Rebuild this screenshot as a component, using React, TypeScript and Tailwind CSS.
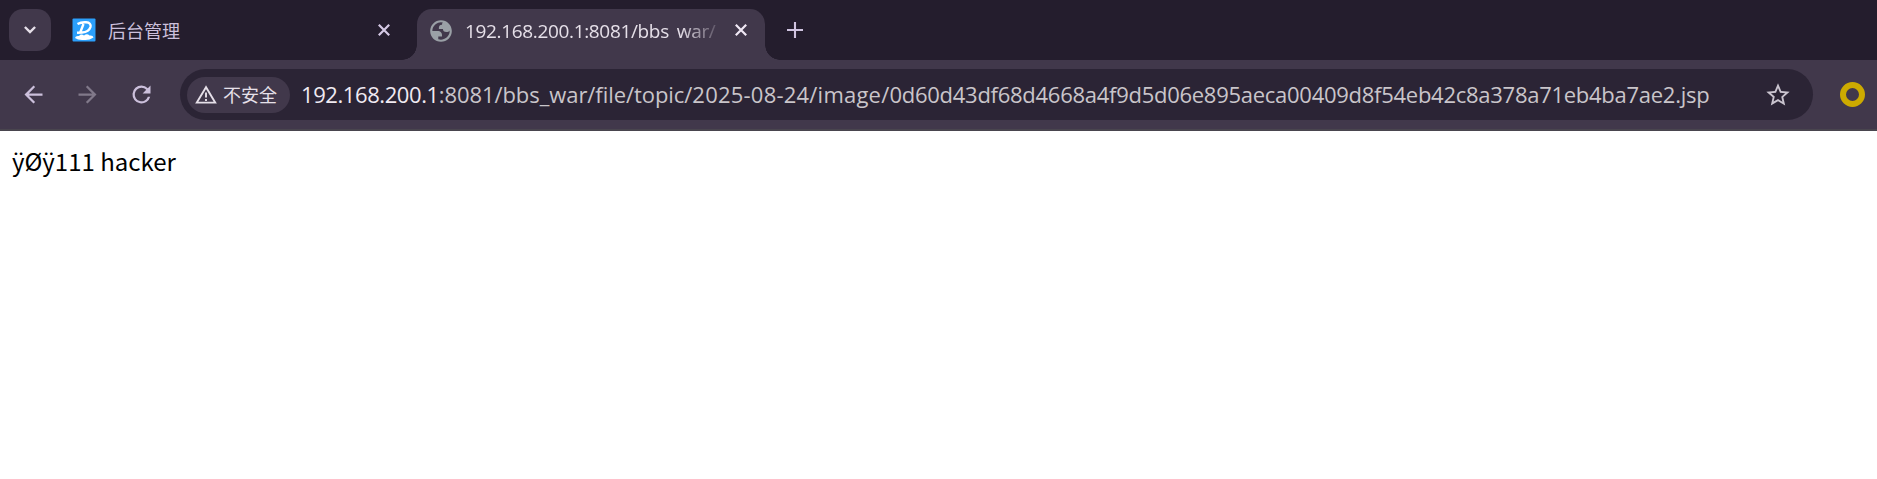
import React from "react";

const ui = "font-['Open_Sans','Noto_Sans_CJK_SC',sans-serif]";

function Close({ className }: { className: string }) {
  return (
    <svg viewBox="0 0 12 12" className={`size-3 shrink-0 ${className}`} fill="none" stroke="currentColor" strokeWidth="2.2">
      <path d="M.8.8 11.2 11.2M11.2.8.8 11.2" />
    </svg>
  );
}

function Mat({ d, className }: { d: string; className: string }) {
  return (
    <svg viewBox="0 0 24 24" className={`shrink-0 ${className}`} fill="currentColor" fillRule="evenodd">
      <path d={d} />
    </svg>
  );
}

function TabStrip() {
  return (
    <div className="flex h-[60px] bg-[#241d2d] pt-[9px]">
      <div className="ml-[9px] flex size-[42px] items-center justify-center rounded-[14px] bg-[#41384b] text-[#e6e0e9]">
        <svg viewBox="0 0 12 8" className="h-2 w-3" fill="none" stroke="currentColor" strokeWidth="2.4">
          <path d="M.9 1 6 6.100 11.100 1" />
        </svg>
      </div>
      <div className="flex h-[42px] w-[351px] items-center pl-[21px]">
        <svg viewBox="0 0 24 24" className="size-6 shrink-0">
          <rect x=".5" y=".5" width="23" height="23" rx="1" fill="#2b9ffb" />
          <path d="M5.500 6Q9 4 14 4.300Q19.500 4.800 18.500 9Q17 14 10 14.500L5 14.700M11.500 6 8.300 14.200" fill="none" stroke="#fff" strokeWidth="2.400" />
          <path d="M3 20Q3.500 17.500 7 18Q9 15.500 12 17.500Q15 15 17.500 17.500Q21 17 21.500 19.500Q17 22.500 12 22Q6 22.500 3 20Z" fill="#fff" />
        </svg>
        <span className={`${ui} ml-[12px] pt-[2px] text-[18px] leading-6 text-[#ccc0dc]`}>后台管理</span>
        <Close className="ml-auto mr-[12px] text-[#d5c9e5]" />
      </div>
      <div className="flex self-end">
        <div className="h-[15px] w-[15px] self-end bg-[radial-gradient(circle_at_0_0,transparent_14.500px,#41384b_15px)]" />
        <div className="flex h-[51px] w-[348px] items-start rounded-t-[15px] bg-[#41384b] pt-[9px]">
          <Mat
            className="ml-[11px] size-[26px] text-[#9aa0a6]"
            d="M12 2C6.480 2 2 6.480 2 12s4.480 10 10 10 10-4.480 10-10S17.520 2 12 2zM4 12h4.400c3.407.022 4.922 1.730 4.543 5.127H9.488v2.470a8.004 8.004 0 0 0 10.498-8.080C19.327 12.506 18.332 13 17 13c-2.137 0-3.206-.916-3.206-2.750h-3.748c-.274-2.728.683-4.092 2.870-4.092 0-.975.327-1.597.811-1.970A8.004 8.004 0 0 0 4 12z"
          />
          <span className={`${ui} ml-[11px] h-[21px] w-[252px] overflow-hidden whitespace-nowrap text-[19px] leading-[26px] tracking-[-0.34px] text-[#e6e0e9] [mask-image:linear-gradient(to_right,#000_215px,transparent_260px)]`}>
            192.168.200.1:8081/bbs_war/
          </span>
          <Close className="ml-[18px] mt-[6px] text-[#f0e8f5]" />
        </div>
        <div className="h-[15px] w-[15px] self-end bg-[radial-gradient(circle_at_100%_0,transparent_14.500px,#41384b_15px)]" />
      </div>
      <svg viewBox="0 0 16 16" className="ml-[7px] mt-[13px] size-4" fill="none" stroke="#d0c4e0" strokeWidth="2.1">
        <path d="M8 0V16M0 8H16" />
      </svg>
    </div>
  );
}

function Toolbar() {
  return (
    <div className="flex h-[71px] items-center border-b-2 border-[#49454e] bg-[#41384b]">
      <Mat className="ml-[19.5px] size-[27px] text-[#ccc0dc]" d="M20 11H7.830l5.590-5.590L12 4l-8 8 8 8 1.410-1.410L7.830 13H20v-2z" />
      <Mat className="ml-[27px] size-[27px] text-[#81798a]" d="M12 4l-1.410 1.410L16.170 11H4v2h12.170l-5.580 5.590L12 20l8-8z" />
      <Mat className="ml-[27px] size-[27px] text-[#ccc0dc]" d="M17.650 6.350A7.958 7.958 0 0 0 12 4a8 8 0 1 0 7.730 10h-2.080A6 6 0 1 1 12 6c1.660 0 3.140.690 4.220 1.780L13 11h7V4l-2.350 2.350z" />
      <div className="ml-[25.5px] flex h-[51px] w-[1633px] items-center rounded-full bg-[#2b2435] pl-[7px]">
        <div className="flex h-9 w-[103px] items-center rounded-full bg-[#41384b] pl-[8px] text-[#e6e0e9]">
          <svg viewBox="0 0 22 20" className="h-5 w-[22px] shrink-0" fill="none" stroke="currentColor" strokeWidth="1.900">
            <path d="M11 2.200 1.800 17.600H20.200ZM11 7.500V12.500M11 14V16" />
          </svg>
          <span className={`${ui} ml-[6px] pt-px text-[18px] leading-6`}>不安全</span>
        </div>
        <div className={`${ui} ml-[11px] whitespace-nowrap pb-[2px] text-[22px] leading-[30px] text-[#c9c5ca]`}>
          <span className="tracking-[-0.420px] text-[#f0eaf2]">192.168.200.1</span>
          <span className="tracking-[-0.060px]">:8081/bbs_war/file/topic/</span>
          <span className="tracking-[0.220px]">2025-08-24/image/</span>
          <span className="tracking-[-0.270px]">0d60d43df68d4668a4f9d5d06e895aeca00409d8f54eb42c8a378a71eb4ba7ae2.jsp</span>
        </div>
        <Mat className="ml-auto mr-[21px] size-[28px] text-[#cac4cf]" d="M22 9.240l-7.190-.620L12 2 9.190 8.630 2 9.240l5.460 4.730L5.820 21 12 17.270 18.180 21l-1.630-7.030L22 9.240zM12 15.400l-3.760 2.270 1-4.280-3.320-2.880 4.380-.380L12 6.100l1.710 4.040 4.380.380-3.320 2.880 1 4.280L12 15.400z" />
      </div>
      <div className="ml-[27px] size-[25px] shrink-0 rounded-full border-[6.500px] border-[#ccaa00]" />
    </div>
  );
}

export default function App() {
  return (
    <div className="h-[479px] w-[1877px] overflow-hidden bg-white">
      <TabStrip />
      <Toolbar />
      <p className="px-[12px] pt-[12px] font-['Noto_Sans_CJK_SC',sans-serif] text-[24px] leading-[35px] text-black">ÿØÿ111 hacker</p>
    </div>
  );
}
